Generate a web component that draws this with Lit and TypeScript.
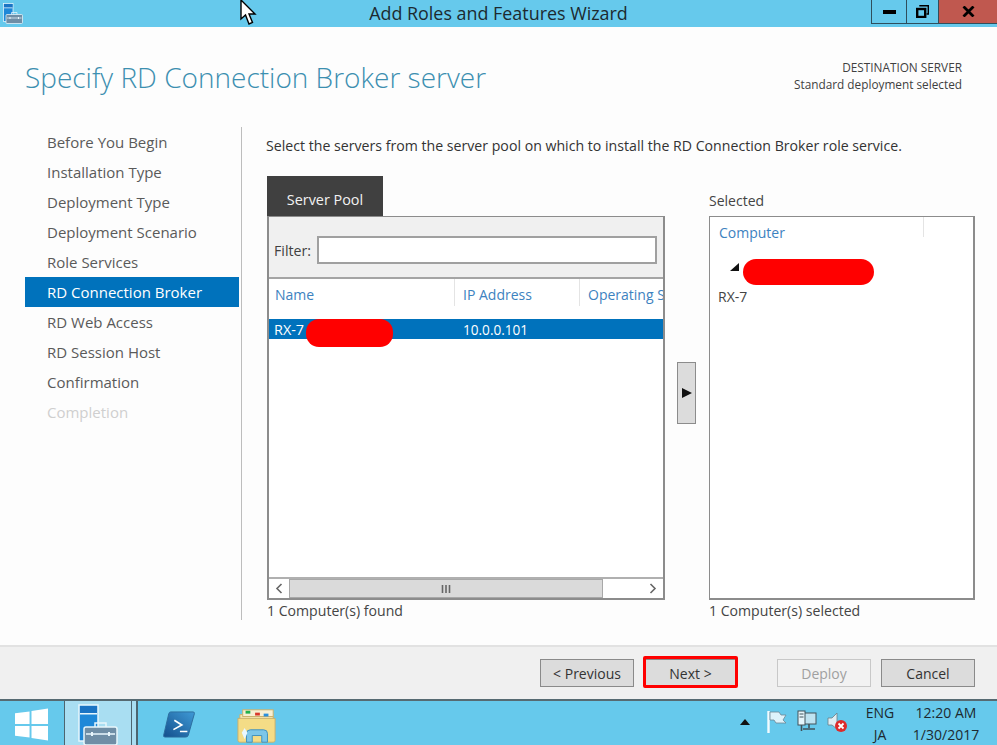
import { LitElement, css, html, svg } from 'lit'
import { customElement } from 'lit/decorators.js'

const steps = [
  'Before You Begin',
  'Installation Type',
  'Deployment Type',
  'Deployment Scenario',
  'Role Services',
  'RD Connection Broker',
  'RD Web Access',
  'RD Session Host',
  'Confirmation',
  'Completion',
]
const activeStep = 'RD Connection Broker'
const disabledStep = 'Completion'

// server + toolbox icon, same drawing for title bar and taskbar
const managerIcon = svg`
  <rect x="1" y="1" width="19" height="36" fill="#1e88d8" stroke="#e8f6fc" stroke-width="1.5"/>
  <rect x="2" y="2" width="17" height="7" fill="#1a74c4"/>
  <rect x="2" y="9" width="17" height="1.5" fill="#e8f6fc"/>
  <rect x="6" y="23" width="33" height="18" rx="2" fill="#6f8ea6" stroke="#e8f6fc" stroke-width="1.5"/>
  <path d="M17 23v-4h11v4" fill="none" stroke="#e8f6fc" stroke-width="1.5"/>
  <path d="M8 30h29" stroke="#e8f6fc" stroke-width="1.5"/>
  <path d="M14 28v4M31 28v4" stroke="#e8f6fc" stroke-width="2"/>
`

@customElement('app-root')
export class AppRoot extends LitElement {
  static styles = css`
    :host {
      display: block;
      width: 997px;
      height: 745px;
      position: relative;
      overflow: hidden;
      font-family: 'Open Sans', 'Noto Sans', sans-serif;
      font-size: 14px;
      color: #444;
      background: #fdfdfd;
    }
    .window {
      display: flex;
      flex-direction: column;
      height: 745px;
    }

    /* title bar */
    .titlebar {
      height: 27px;
      flex: none;
      background: #66c9ec;
      display: flex;
      align-items: flex-start;
      position: relative;
    }
    .app-icon {
      width: 20px;
      height: 21px;
      margin: 3px 0 0 3px;
    }
    .title-text {
      position: absolute;
      left: 0;
      right: 0;
      top: 1px;
      text-align: center;
      font-size: 17.9px;
      line-height: 25px;
      color: #1c2a30;
    }
    .win-btns {
      margin-left: auto;
      display: flex;
      height: 23px;
      border: solid #2f4e5c;
      border-width: 0 0 1px 1px;
      position: relative;
    }
    .win-btn {
      width: 34px;
      display: flex;
      align-items: center;
      justify-content: center;
      border-right: 1px solid #2f4e5c;
    }
    .win-btn.restore {
      width: 31px;
    }
    .win-btn svg {
      display: block;
    }
    .win-btn.close {
      width: 58px;
      background: #c0584f;
      border-right: none;
    }

    /* header */
    .header {
      height: 100px;
      flex: none;
      display: flex;
      justify-content: space-between;
      padding: 0 35px 0 25px;
      box-sizing: border-box;
    }
    .page-title {
      margin: 30px 0 0;
      font-size: 28px;
      line-height: 40px;
      font-weight: 300;
      color: #3c8fb0;
      white-space: nowrap;
    }
    .dest {
      margin-top: 32px;
      text-align: right;
      font-size: 11.8px;
      line-height: 16.5px;
      color: #3f3f3f;
    }

    /* body */
    .body {
      flex: 1;
      display: flex;
      min-height: 0;
    }
    .nav {
      width: 214px;
      margin: 0 0 0 25px;
      flex: none;
    }
    .nav-item {
      height: 30px;
      line-height: 31px;
      padding-left: 22px;
      font-size: 15px;
      color: #5a5a5a;
      white-space: nowrap;
    }
    .nav-item.active {
      background: #0072bc;
      color: #fff;
    }
    .nav-item.disabled {
      color: #cfcfcf;
    }
    .divider {
      width: 1px;
      height: 493px;
      margin: 0 0 0 2px;
      background: #bdbdbd;
      flex: none;
    }
    .content {
      margin-left: 24px;
      width: 710px;
      flex: none;
    }
    .intro {
      height: 49px;
      padding-top: 9px;
      box-sizing: border-box;
      font-size: 14.15px;
      line-height: 20px;
      color: #333;
      white-space: nowrap;
    }
    .columns {
      display: flex;
    }
    .pool {
      width: 398px;
      margin-left: 1px;
      flex: none;
    }
    .tab {
      width: 116px;
      height: 40px;
      padding-top: 14px;
      box-sizing: border-box;
      text-align: center;
      background: #404040;
      color: #f2f2f2;
      font-size: 14.4px;
      line-height: 20px;
    }
    .pool-box {
      height: 384px;
      box-sizing: border-box;
      border: 2px solid #8c8c8c;
      border-width: 1px 2px 2px 2px;
      background: #fff;
      display: flex;
      flex-direction: column;
    }
    .filter {
      height: 62px;
      flex: none;
      box-sizing: border-box;
      display: flex;
      align-items: center;
      gap: 6px;
      padding: 6px 6px 0 5px;
      background: #f0f0f0;
      border-bottom: 2px solid #a5a5a5;
      font-size: 14.2px;
      color: #404040;
    }
    .filter-input {
      flex: 1;
      height: 28px;
      box-sizing: border-box;
      background: #fff;
      border: 2px solid #a0a0a0;
    }
    .grid-head {
      height: 40px;
      flex: none;
      display: flex;
      font-size: 14px;
      line-height: 32px;
      color: #3d82c0;
      overflow: hidden;
      white-space: nowrap;
    }
    .col {
      box-sizing: border-box;
      padding-left: 6px;
      height: 27px;
      flex: none;
      border-right: 1px solid #e4e4e4;
    }
    .col.name {
      width: 186px;
    }
    .col.ip {
      width: 125px;
      padding-left: 8px;
    }
    .col.os {
      width: 120px;
      border-right: none;
      padding-left: 8px;
    }
    .grid-row {
      height: 20px;
      flex: none;
      display: flex;
      background: #0072bc;
      color: #fff;
      font-size: 14px;
      line-height: 21px;
    }
    .grid-row .cell {
      box-sizing: border-box;
      padding-left: 5px;
      flex: none;
    }
    .grid-row .cell.name {
      width: 187px;
      font-size: 14.4px;
    }
    .grid-row .cell.ip {
      padding-left: 7px;
      font-size: 13.6px;
    }
    .grid-empty {
      flex: 1;
    }
    .hscroll {
      height: 21px;
      flex: none;
      box-sizing: border-box;
      display: flex;
      align-items: stretch;
      border-top: 2px solid #b0b0b0;
      background: #fff;
    }
    .arrow-cell {
      width: 20px;
      flex: none;
      display: flex;
      align-items: center;
      justify-content: center;
    }
    .thumb {
      width: 314px;
      flex: none;
      box-sizing: border-box;
      background: #dadada;
      border: 1px solid #a8a8a8;
      display: flex;
      align-items: center;
      justify-content: center;
    }
    .track {
      flex: 1;
    }
    .status {
      margin-top: 1px;
      font-size: 14.1px;
      line-height: 20px;
      color: #444;
    }
    .mover {
      width: 44px;
      flex: none;
      padding: 186px 0 0 12px;
      box-sizing: border-box;
    }
    .mover-btn {
      width: 19px;
      height: 62px;
      box-sizing: border-box;
      background: #dcdcdc;
      border: 1px solid #8c8c8c;
      display: flex;
      align-items: center;
      justify-content: center;
    }
    .selected {
      width: 266px;
      flex: none;
    }
    .selected-label {
      height: 40px;
      padding-top: 15px;
      box-sizing: border-box;
      font-size: 14px;
      line-height: 20px;
      color: #444;
    }
    .selected-box {
      height: 384px;
      box-sizing: border-box;
      border: 2px solid #8c8c8c;
      border-width: 1px 2px 2px 1px;
      background: #fff;
    }
    .sel-head {
      height: 32px;
      padding-left: 9px;
      font-size: 14px;
      line-height: 31px;
      color: #3d82c0;
    }
    .sel-head span {
      display: block;
      width: 204px;
      height: 20px;
      border-right: 1px solid #e4e4e4;
    }
    .tree-group {
      height: 38px;
      padding: 14px 0 0 20px;
      box-sizing: border-box;
    }
    .tree-group svg {
      display: block;
    }
    .tree-leaf {
      padding-left: 8px;
      font-size: 14px;
      line-height: 20px;
      color: #444;
    }

    /* bottom button strip */
    .footer {
      height: 54px;
      flex: none;
      box-sizing: border-box;
      background: #f0f0f0;
      border-top: 2px solid #e2e2e2;
      display: flex;
      padding: 12px 22px 0 540px;
    }
    .btn {
      width: 94px;
      height: 28px;
      box-sizing: border-box;
      background: #dcdcdc;
      border: 1px solid #8a8a8a;
      font-size: 14px;
      line-height: 27px;
      text-align: center;
      color: #333;
      flex: none;
    }
    .btn.next {
      width: 91px;
      margin-left: 11px;
    }
    .btn.deploy {
      margin-left: 41px;
      background: #f2f2f2;
      border-color: #c8c8c8;
      color: #a0a0a0;
    }
    .btn.cancel {
      margin-left: 10px;
    }

    /* taskbar */
    .taskbar {
      height: 46px;
      flex: none;
      box-sizing: border-box;
      background: #66c9ec;
      border-top: 2px solid #566a72;
      display: flex;
      align-items: stretch;
    }
    .start {
      width: 64px;
      flex: none;
      box-sizing: border-box;
      padding: 7px 0 0 15px;
    }
    .running {
      width: 68px;
      flex: none;
      box-sizing: border-box;
      background: #a9def2;
      border: solid #4c6570;
      border-width: 0 1px;
      padding: 3px 0 0 13px;
      overflow: hidden;
    }
    .running-stack {
      width: 6px;
      flex: none;
      box-sizing: border-box;
      background: #a9def2;
      border-right: 2px solid #4c6570;
    }
    .pin-ps {
      margin-left: 24px;
      padding-top: 10px;
      width: 75px;
      flex: none;
      box-sizing: border-box;
    }
    .pin-folder {
      padding-top: 7px;
      flex: none;
    }
    .tray {
      margin-left: auto;
      display: flex;
      align-items: flex-start;
    }
    .tray-icons {
      display: flex;
      align-items: center;
      height: 40px;
      gap: 10px;
      padding-top: 2px;
      box-sizing: border-box;
    }
    .tray-icons svg {
      display: block;
      flex: none;
    }
    .tray-icons svg.tray-up {
      margin-right: 6px;
    }
    .lang {
      width: 44px;
      margin-left: 10px;
      text-align: center;
      font-size: 14px;
      line-height: 22px;
      padding-top: 1px;
      color: #1d2a30;
    }
    .clock {
      width: 76px;
      margin: 0 13px 0 6px;
      text-align: center;
      font-size: 14px;
      line-height: 22px;
      padding-top: 1px;
      color: #1d2a30;
      white-space: nowrap;
    }

    /* things lying over the screenshot */
    .cursor {
      position: absolute;
      left: 240px;
      top: 0;
    }
    .redact {
      position: absolute;
      background: #ff0000;
      border-radius: 13px;
    }
    .redact.pool-name {
      left: 306px;
      top: 319px;
      width: 87px;
      height: 28px;
    }
    .redact.tree-name {
      left: 743px;
      top: 259px;
      width: 131px;
      height: 26px;
    }
    .next-mark {
      position: absolute;
      left: 643px;
      top: 656px;
      width: 95px;
      height: 32px;
      box-sizing: border-box;
      border: 3px solid #ff0000;
      border-radius: 2px;
    }
  `

  private renderTitlebar() {
    return html`
      <div class="titlebar">
        <svg class="app-icon" viewBox="0 0 40 42">${managerIcon}</svg>
        <div class="title-text">Add Roles and Features Wizard</div>
        <div class="win-btns">
          <div class="win-btn">
            <svg width="13" height="4" viewBox="0 0 13 4"><rect width="13" height="4" fill="#000"/></svg>
          </div>
          <div class="win-btn restore">
            <svg width="13" height="13" viewBox="0 0 13 13">
              <path d="M4 1.500V0.700H12.300V9H10.500" fill="none" stroke="#000" stroke-width="1.400"/>
              <rect x="1.200" y="4" width="8" height="8" fill="none" stroke="#000" stroke-width="2.400"/>
            </svg>
          </div>
          <div class="win-btn close">
            <svg width="13" height="11" viewBox="0 0 13 11">
              <path d="M1.500 0.500L11.500 10.500M11.500 0.500L1.500 10.500" stroke="#000" stroke-width="2.800"/>
            </svg>
          </div>
        </div>
      </div>
    `
  }

  private renderPool() {
    return html`
      <div class="pool">
        <div class="tab">Server Pool</div>
        <div class="pool-box">
          <div class="filter">
            <span>Filter:</span>
            <div class="filter-input"></div>
          </div>
          <div class="grid-head">
            <div class="col name">Name</div>
            <div class="col ip">IP Address</div>
            <div class="col os">Operating S</div>
          </div>
          <div class="grid-row">
            <div class="cell name">RX-7</div>
            <div class="cell ip">10.0.0.101</div>
          </div>
          <div class="grid-empty"></div>
          <div class="hscroll">
            <div class="arrow-cell">
              <svg width="8" height="11" viewBox="0 0 8 11"><path d="M6.500 1L2 5.500L6.500 10" fill="none" stroke="#666" stroke-width="1.600"/></svg>
            </div>
            <div class="thumb">
              <svg width="10" height="8" viewBox="0 0 10 8"><path d="M1.500 0v8M5 0v8M8.500 0v8" stroke="#666" stroke-width="1.600"/></svg>
            </div>
            <div class="track"></div>
            <div class="arrow-cell">
              <svg width="8" height="11" viewBox="0 0 8 11"><path d="M1.500 1L6 5.500L1.500 10" fill="none" stroke="#666" stroke-width="1.600"/></svg>
            </div>
          </div>
        </div>
        <div class="status">1 Computer(s) found</div>
      </div>
    `
  }

  private renderSelected() {
    return html`
      <div class="selected">
        <div class="selected-label">Selected</div>
        <div class="selected-box">
          <div class="sel-head"><span>Computer</span></div>
          <div class="tree-group">
            <svg width="9" height="9" viewBox="0 0 9 9"><path d="M9 0V8H0Z" fill="#111"/></svg>
          </div>
          <div class="tree-leaf">RX-7</div>
        </div>
        <div class="status">1 Computer(s) selected</div>
      </div>
    `
  }

  private renderTaskbar() {
    return html`
      <div class="taskbar">
        <div class="start">
          <svg width="33" height="33" viewBox="0 0 34 33">
            <path d="M0 5L15 3V16H0ZM17 2.700L34 0V16H17ZM0 18H15V30L0 28ZM17 18H34V33L17 30.300Z" fill="#fff"/>
          </svg>
        </div>
        <div class="running">
          <svg width="40" height="42" viewBox="0 0 40 42">${managerIcon}</svg>
        </div>
        <div class="running-stack"></div>
        <div class="pin-ps">
          <svg width="34" height="27" viewBox="0 0 34 29">
            <defs>
              <linearGradient id="ps" x1="0" y1="1" x2="1" y2="0">
                <stop offset="0" stop-color="#134f8c"/>
                <stop offset="1" stop-color="#3f9ad6"/>
              </linearGradient>
            </defs>
            <path d="M8 1H32Q34 1 33.500 3L27 26Q26.500 28 24 28H2Q0 28 0.500 26L6 3Q6.500 1 8 1Z" fill="url(#ps)" stroke="#2b6a9c"/>
            <path d="M12 10L20 15L11 20" fill="none" stroke="#fff" stroke-width="1.800"/>
            <path d="M18 22H26" stroke="#fff" stroke-width="1.600"/>
          </svg>
        </div>
        <div class="pin-folder">
          <svg width="40" height="36" viewBox="0 0 42 36">
            <path d="M3 6H38V12H3Z" fill="#f5e6b0" stroke="#c9b06a"/>
            <rect x="6" y="1" width="32" height="7" fill="#f7efd2" stroke="#c9b06a"/>
            <rect x="9" y="2" width="5" height="3" fill="#22b14c"/>
            <rect x="19" y="4" width="5" height="3" fill="#d9392b"/>
            <rect x="28" y="5" width="5" height="3" fill="#2a8fdc"/>
            <path d="M1 10H40V33Q40 35 38 35H3Q1 35 1 33Z" fill="#f4dc86" stroke="#c9b06a"/>
            <path d="M10 35V26Q10 22 14 22H28Q32 22 32 26V35H26V28H16V35Z" fill="#7cc6e8" stroke="#3d8fbe"/>
            <path d="M8 20L11 25L8 32L5 25Z" fill="#eaf8ff"/>
          </svg>
        </div>
        <div class="tray">
          <div class="tray-icons">
            <svg class="tray-up" width="10" height="6" viewBox="0 0 10 6"><path d="M0 6L5 0L10 6Z" fill="#111"/></svg>
            <svg width="21" height="24" viewBox="0 0 21 24">
              <path d="M2.500 1V23" stroke="#f2fbff" stroke-width="2.400"/>
              <path d="M4 2H13L15 5H20L17 10L20 13H10L8 10H4Z" fill="#dff3fb" stroke="#6f8794" stroke-width="0.800"/>
            </svg>
            <svg width="20" height="24" viewBox="0 0 20 24">
              <rect x="5" y="3" width="14" height="11" fill="#bfe3f1" stroke="#41525a"/>
              <path d="M12 14V18M6 19H18" stroke="#41525a" stroke-width="1.600"/>
              <rect x="1" y="1" width="7" height="14" fill="#e6f5fb" stroke="#41525a"/>
              <path d="M2.500 4H6.500M2.500 7H6.500" stroke="#41525a"/>
              <path d="M4.500 15V21" stroke="#41525a" stroke-width="1.600"/>
            </svg>
            <svg width="21" height="22" viewBox="0 0 21 22">
              <path d="M1 7H5L10 2V18L5 14H1Z" fill="#dfeef4" stroke="#6d7d85" stroke-width="0.800"/>
              <circle cx="14" cy="15" r="6" fill="#dd2b2b"/>
              <path d="M11.500 12.500L16.500 17.500M16.500 12.500L11.500 17.500" stroke="#fff" stroke-width="1.800"/>
            </svg>
          </div>
          <div class="lang">ENG<br />JA</div>
          <div class="clock">12:20 AM<br />1/30/2017</div>
        </div>
      </div>
    `
  }

  render() {
    return html`
      <div class="window">
        ${this.renderTitlebar()}
        <div class="header">
          <h1 class="page-title">Specify RD Connection Broker server</h1>
          <div class="dest">DESTINATION SERVER<br />Standard deployment selected</div>
        </div>
        <div class="body">
          <div class="nav">
            ${steps.map(
              (s) => html`<div class="nav-item ${s === activeStep ? 'active' : ''} ${s === disabledStep ? 'disabled' : ''}">${s}</div>`
            )}
          </div>
          <div class="divider"></div>
          <div class="content">
            <div class="intro">Select the servers from the server pool on which to install the RD Connection Broker role service.</div>
            <div class="columns">
              ${this.renderPool()}
              <div class="mover">
                <div class="mover-btn">
                  <svg width="10" height="10" viewBox="0 0 10 10"><path d="M0 0L10 5L0 10Z" fill="#111"/></svg>
                </div>
              </div>
              ${this.renderSelected()}
            </div>
          </div>
        </div>
        <div class="footer">
          <div class="btn">&lt; Previous</div>
          <div class="btn next">Next &gt;</div>
          <div class="btn deploy">Deploy</div>
          <div class="btn cancel">Cancel</div>
        </div>
        ${this.renderTaskbar()}
      </div>
      <div class="redact pool-name"></div>
      <div class="redact tree-name"></div>
      <div class="next-mark"></div>
      <svg class="cursor" width="18" height="26" viewBox="0 0 18 26">
        <path d="M1 0V19L5.500 15L9 24L12.500 22.500L9 14H15Z" fill="#fff" stroke="#000" stroke-width="1.400"/>
      </svg>
    `
  }
}
